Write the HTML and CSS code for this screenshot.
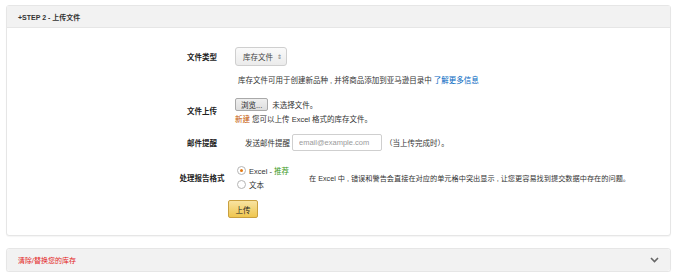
FILE: index.html
```html
<!DOCTYPE html>
<html lang="zh">
<head>
<meta charset="utf-8">
<link rel="stylesheet" href="styles.css">
</head>
<body>
<section class="panel">
  <div class="panel-head"><span class="step">+STEP 2 - 上传文件</span></div>
  <div class="panel-body">
    <div class="row row-type">
      <div class="label">文件类型</div>
      <div class="field"><div class="select">库存文件 <span class="arrows">⇕</span></div></div>
    </div>
    <div class="row row-help">
      <div class="label"></div>
      <div class="field help">库存文件可用于创建新品种 , 并将商品添加到亚马逊目录中 <a class="link">了解更多信息</a></div>
    </div>
    <div class="row row-upload">
      <div class="label">文件上传</div>
      <div class="field">
        <div class="file-line"><span class="browse">浏览...</span><span>未选择文件。</span></div>
        <div class="note"><span class="new">新建</span> 您可以上传 Excel 格式的库存文件。</div>
      </div>
    </div>
    <div class="row row-email">
      <div class="label">邮件提醒</div>
      <div class="field email-line">
        <span>发送邮件提醒</span>
        <input class="email" type="text" placeholder="email@example.com">
        <span>（当上传完成时）。</span>
      </div>
    </div>
    <div class="row row-format">
      <div class="label">处理报告格式</div>
      <div class="field format">
        <div class="radios">
          <div class="radio-item"><span class="radio checked"></span><span>Excel - <span class="rec">推荐</span></span></div>
          <div class="radio-item"><span class="radio"></span><span>文本</span></div>
        </div>
        <div class="format-desc">在 Excel 中 , 错误和警告会直接在对应的单元格中突出显示 , 让您更容易找到提交数据中存在的问题。</div>
      </div>
    </div>
    <div class="row row-submit">
      <div class="submit-wrap"><span class="upload-btn">上传</span></div>
    </div>
  </div>
</section>
<section class="panel panel-closed">
  <div class="panel-head head-closed">
    <span class="red-title">清除/替换您的库存</span>
    <svg class="chev" width="9" height="6" viewBox="0 0 9 6"><path d="M1 1 L4.5 4.5 L8 1" fill="none" stroke="#666" stroke-width="1.6"/></svg>
  </div>
</section>
</body>
</html>
```
FILE: styles.css
```css
* { box-sizing: border-box; }
body {
  margin: 0;
  padding: 5px 10px 0 6px;
  background: #fff;
  font-family: "Liberation Sans", "Noto Sans CJK SC", sans-serif;
  font-size: 7.5px;
  color: #333;
}
.panel {
  border: 1px solid #e6e6e6;
  border-radius: 3px;
  background: #fff;
  box-shadow: 0 1px 1px rgba(0,0,0,0.04);
}
.panel-head {
  height: 22px;
  background: #f2f2f2;
  border-bottom: 1px solid #e6e6e6;
  display: flex;
  align-items: center;
  padding-left: 11px;
}
.step { font-weight: bold; font-size: 7px; color: #333; }
.panel-body {
  padding: 19px 0 17px 0;
  display: flex;
  flex-direction: column;
}
.row { display: flex; align-items: flex-start; }
.label {
  width: 64px;
  margin-left: 163px;
  text-align: center;
  font-weight: bold;
  color: #222;
  flex-shrink: 0;
}
.field { margin-left: 1px; }
.row-type { align-items: center; height: 19px; }
.select {
  width: 52px;
  height: 19px;
  border: 1px solid #cfcfcf;
  border-radius: 3px;
  background: linear-gradient(#fafafa, #ebebeb);
  display: flex;
  align-items: center;
  padding-left: 7px;
  color: #444;
}
.arrows { font-size: 6px; color: #777; margin-left: 4px; }
.row-help { margin-top: 9px; }
.help { margin-left: 4px; line-height: 12px; }
.link { color: #0066c0; }
.row-upload { margin-top: 11px; }
.row-upload .label { margin-top: 7px; }
.file-line { display: flex; align-items: center; gap: 4px; height: 13px; }
.browse {
  display: inline-flex;
  align-items: center;
  height: 13px;
  padding: 0 5px;
  background: linear-gradient(#efefef, #dedede);
  border: 1px solid #a9a9a9;
  border-radius: 2px;
  color: #222;
}
.note { line-height: 12px; margin-top: 3px; }
.new { color: #c45500; }
.row-email { margin-top: 8px; align-items: center; }
.email-line { display: flex; align-items: center; margin-left: 11px; }
.email {
  width: 90px;
  height: 17px;
  margin: 0 3px 0 2px;
  border: 1px solid #cfcfcf;
  border-radius: 2px;
  font: inherit;
  padding: 0 6px;
  color: #333;
}
.email::placeholder { color: #9a9a9a; }
.row-format { margin-top: 13px; align-items: center; }
.format { display: flex; align-items: center; margin-left: 3px; }
.radios { display: flex; flex-direction: column; gap: 1px; width: 72px; }
.radio-item { display: flex; align-items: center; height: 13px; color: #333; }
.radio {
  width: 9px; height: 9px;
  border: 1px solid #b5b5b5;
  border-radius: 50%;
  margin-right: 3px;
  background: #fff;
  position: relative;
  flex-shrink: 0;
}
.radio.checked::after {
  content: "";
  position: absolute;
  left: 2px; top: 2px;
  width: 3px; height: 3px;
  border-radius: 50%;
  background: #e47911;
}
.rec { color: #3a9a22; }
.format-desc { color: #333; font-size: 7.2px; }
.row-submit { margin-top: 9px; }
.submit-wrap { margin-left: 221px; }
.upload-btn {
  display: inline-flex;
  align-items: center;
  justify-content: center;
  width: 30px;
  height: 18px;
  border: 1px solid #c9a03f;
  border-radius: 2px;
  background: linear-gradient(#f8e3a1, #efc64f);
  color: #222;
}
.panel-closed { margin-top: 12px; }
.head-closed {
  border-bottom: none;
  justify-content: space-between;
  padding-right: 11px;
  border-radius: 3px;
}
.red-title { color: #e31b1b; font-size: 7px; }
.chev { display: block; }
```
